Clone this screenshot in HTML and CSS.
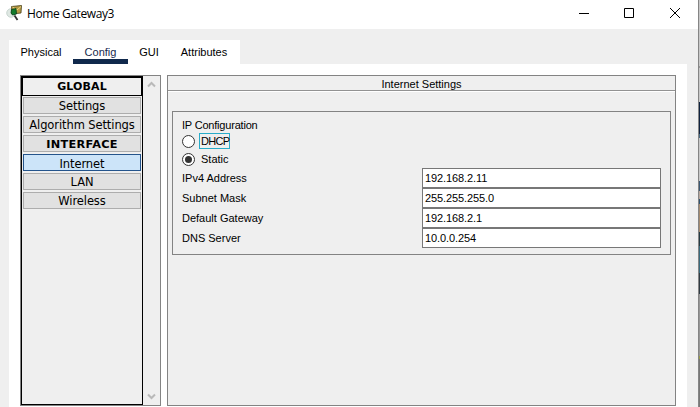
FILE: index.html
```html
<!DOCTYPE html>
<html lang="en">
<head>
<meta charset="utf-8">
<title>Home Gateway3</title>
<link rel="stylesheet" href="styles.css">
</head>
<body>
<div class="screen">
<main class="window">
  <header class="titlebar">
    <svg class="app-icon" width="18" height="18" viewBox="0 0 18 18">
      <circle cx="5" cy="9" r="4.3" fill="#dfe8e3" stroke="#b9c9c2" stroke-width=".7"/>
      <path d="M5.500 2.500L15.500 1.500L15 9L6 10Z" fill="#b59a45" stroke="#463d15" stroke-width=".8"/>
      <path d="M6.500 3L11 6L15 2.500" fill="none" stroke="#f0d780" stroke-width="1"/>
      <path d="M5.500 5.500L10 4.500L10.500 10L6.500 11L5 9Z" fill="#127b2c" stroke="#073f17" stroke-width=".8"/>
      <path d="M8.500 11.500L11.500 16" stroke="#333" stroke-width="1.8"/>
    </svg>
    <h1>Home Gateway3</h1>
    <svg class="controls" width="104" height="14" viewBox="0 0 104 14" fill="none" stroke="#000">
      <path d="M0 7.5H10M45.5 2.5H54.5V11.5H45.5ZM91 2L101 12M101 2L91 12"/>
    </svg>
  </header>
  <nav class="tabs">
    <span class="tab physical">Physical</span>
    <span class="tab config">Config</span>
    <span class="tab gui">GUI</span>
    <span class="tab attributes">Attributes</span>
  </nav>
  <section class="content">
    <aside class="sidebar">
      <div class="list">
        <div class="heading">GLOBAL</div>
        <div class="item">Settings</div>
        <div class="item">Algorithm Settings</div>
        <div class="item strong">INTERFACE</div>
        <div class="item selected">Internet</div>
        <div class="item">LAN</div>
        <div class="item">Wireless</div>
      </div>
      <div class="scroll">
        <svg width="9" height="7" viewBox="0 0 9 7"><path d="M1 5.5L4.5 2L8 5.5"/></svg>
        <svg width="9" height="7" viewBox="0 0 9 7"><path d="M1 1.5L4.5 5L8 1.5"/></svg>
      </div>
    </aside>
    <section class="settings">
      <h2>Internet Settings</h2>
      <div class="group">
        <div class="legend">IP Configuration</div>
        <div class="option"><i class="radio"></i><span class="focused">DHCP</span></div>
        <div class="option"><i class="radio on"></i><span>Static</span></div>
        <div class="fields">
          <label>IPv4 Address</label><div class="field">192.168.2.11</div>
          <label>Subnet Mask</label><div class="field">255.255.255.0</div>
          <label>Default Gateway</label><div class="field">192.168.2.1</div>
          <label>DNS Server</label><div class="field">10.0.0.254</div>
        </div>
      </div>
    </section>
  </section>
</main>
<div class="edge"></div>
</div>
</body>
</html>
```
FILE: styles.css
```css
* { box-sizing: border-box; }
body { margin: 0; font: 11px "Liberation Sans", Arial, sans-serif; color: #000; }
.screen { display: flex; width: 700px; height: 407px; overflow: hidden; }
.window { width: 698px; height: 407px; background: #efefef; }
.edge {
  width: 2px;
  background: linear-gradient(#c8c8c8 0 66px, #999 66px 68px, #c8c8c8 68px 102px, #10233f 102px 134px, #496980 134px 138px, #c8c8c8 138px 181px, #3b5873 181px 191px, #b7a79d 191px 199px, #31536f 199px 204px, #a38a70 204px 232px, #263c45 232px 246px, #396a7d 246px 273px, #303b43 273px 294px, #969696 294px 356px, #9a9d48 356px 359px, #777 359px);
  border-left: 1px solid #858585;
}
.titlebar { display: flex; height: 29px; background: #fff; }
.app-icon { margin: 4px 0 0 6px; }
.titlebar h1 { margin: 4px auto 0 3px; font: 12px/20px "Open Sans", "Noto Sans", sans-serif; letter-spacing: -.4px; white-space: nowrap; }
.controls { margin: 6px 15px 0 0; }
.tabs { display: flex; width: 231px; height: 24px; margin: 11px 0 0 9px; background: #fff; }
.tab { height: 24px; line-height: 25px; text-align: center; white-space: nowrap; }
.physical { width: 64px; }
.config { width: 55px; color: #16294d; border-bottom: 5px solid #10294c; }
.gui { width: 42px; }
.attributes { width: 68px; }
.content { display: flex; gap: 6px; width: 678px; height: 343px; margin-left: 9px; padding: 11px 10px 1px 11px; background: #fff; }
.sidebar { display: flex; width: 141px; height: 331px; border: 1px solid #838383; background: #efefef; }
.list { width: 122px; border: 1px solid #000; font: 11.5px/17px "DejaVu Sans", sans-serif; letter-spacing: -.1px; text-align: center; }
.heading { height: 19px; border: 1px solid #000; font-weight: bold; font-size: 11px; line-height: 18px; letter-spacing: .1px; }
.item { height: 17px; margin: 0 1px 2px; border: 1px solid #adadad; background: #e1e1e1; line-height: 17px; white-space: nowrap; }
.heading + .item { margin-top: 1px; }
.strong { font-weight: bold; font-size: 11.3px; letter-spacing: .3px; }
.selected { background: #cce4f9; border-color: #24548c; line-height: 18px; }
.scroll { display: flex; flex: 1; flex-direction: column; align-items: center; justify-content: space-between; padding: 5px 0; }
.scroll path { fill: none; stroke: #b9b9b9; stroke-width: 2; }
.settings { width: 509px; height: 331px; border: 1px solid #838383; background: #efefef; }
.settings h2 { height: 15px; margin: 0; border-bottom: 1px solid #929292; box-shadow: 0 1px #fff; font: 11px/16px "Liberation Sans", Arial, sans-serif; text-align: center; }
.group { height: 144px; margin: 20px 4px 0; padding: 6px 9px; border: 1px solid #838383; }
.legend { height: 14px; line-height: 15px; letter-spacing: -.2px; }
.option { display: flex; align-items: center; height: 18px; }
.radio { display: flex; width: 13px; height: 13px; margin-right: 4px; border: 1px solid #333; border-radius: 50%; background: #fff; align-items: center; justify-content: center; }
.on::after { content: ""; width: 7px; height: 7px; border-radius: 50%; background: #333; }
.option span { height: 16px; padding: 0 1px; border: 1px solid transparent; line-height: 15px; }
.option .focused { width: 31px; border-color: #28acc9; letter-spacing: -.7px; }
.fields { display: grid; grid-template-columns: 240px 239px; grid-auto-rows: 20px; line-height: 21px; }
.field { height: 20px; padding-left: 2px; border: 1px solid #777; background: #fff; line-height: 19px; letter-spacing: -.1px; }
```
